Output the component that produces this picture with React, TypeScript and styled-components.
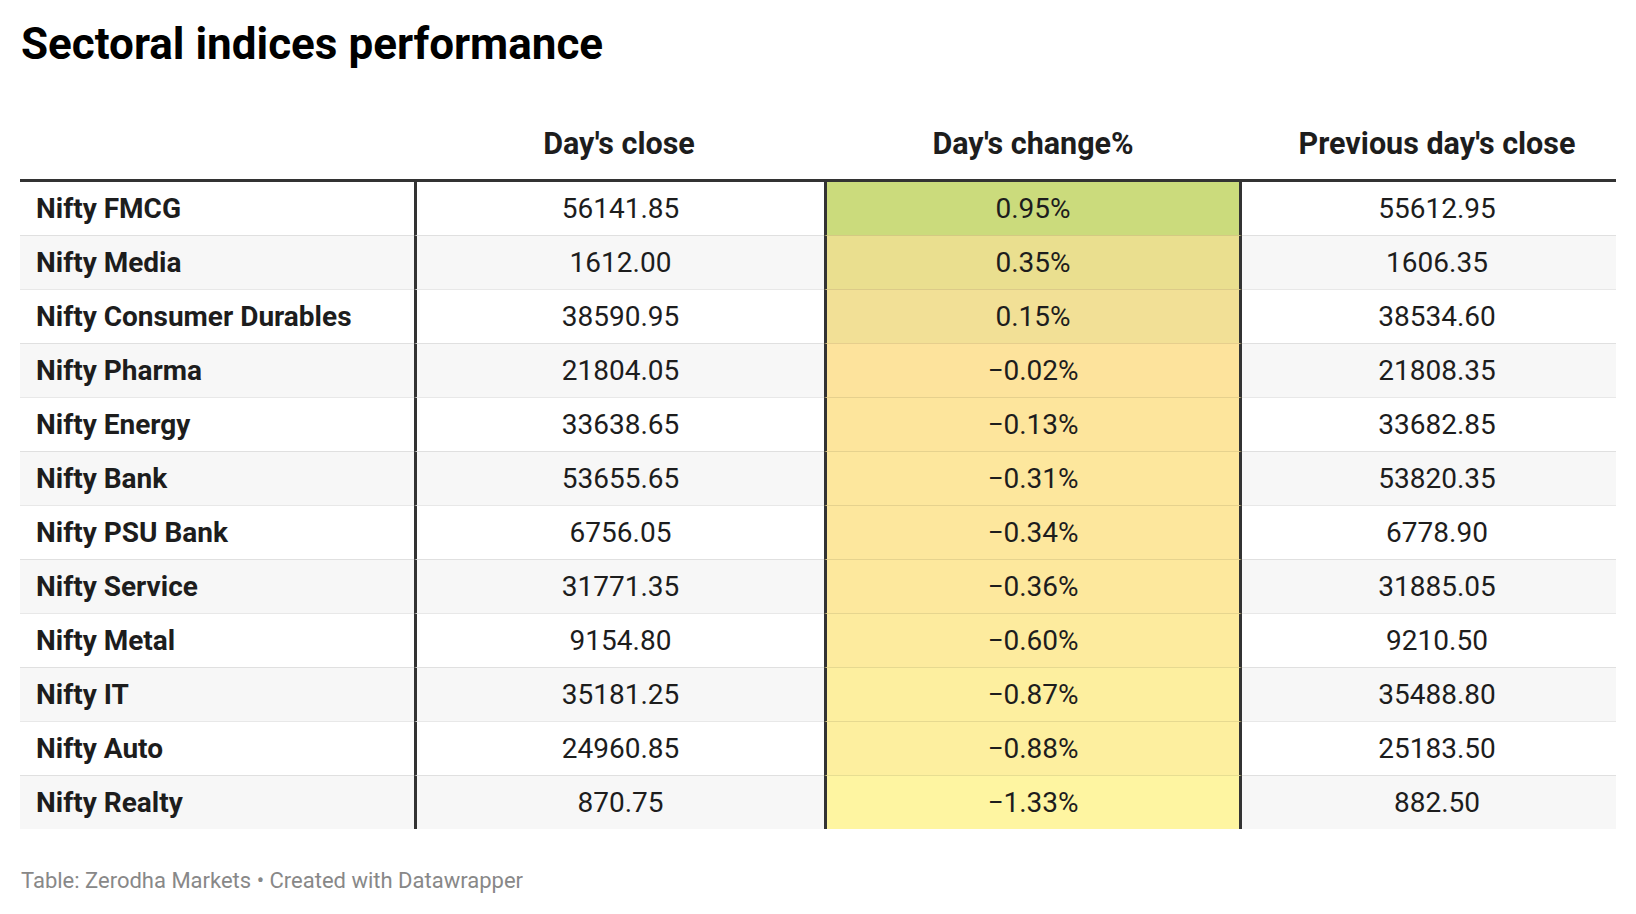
import React from 'react'
import styled, { createGlobalStyle } from 'styled-components'

const GlobalStyle = createGlobalStyle`
    html, body {
        margin: 0;
        padding: 0;
        background: #fff;
    }
    body {
        font-family: Roboto, 'Liberation Sans', Arial, sans-serif;
        -webkit-font-smoothing: antialiased;
    }
    * {
        box-sizing: border-box;
    }
`

const columns = '394px 410px 418px 374px'

const Page = styled.div`
    padding: 18px 20px 0;
    width: 1636px;
`

const Title = styled.h1`
    margin: 0 0 56px;
    font-size: 44px;
    line-height: 52px;
    font-weight: 700;
    color: #000;
    padding-left: 1px;
`

const Table = styled.div`
    display: flex;
    flex-direction: column;
    width: 1596px;
`

const HeadRow = styled.div`
    display: grid;
    grid-template-columns: ${columns};
    border-bottom: 3px solid #333;
`

const HeadCell = styled.div<{ $last?: boolean }>`
    padding: 0 ${p => (p.$last ? '0' : '16px')} 17px 16px;
    font-size: 30.5px;
    line-height: 36px;
    font-weight: 700;
    color: #1d1d1d;
    text-align: center;
    white-space: nowrap;
`

const Row = styled.div<{ $striped: boolean }>`
    display: grid;
    grid-template-columns: ${columns};
    background: ${p => (p.$striped ? '#f7f7f7' : '#fff')};
`

const Cell = styled.div<{
    $first: boolean
    $label?: boolean
    $heat?: string
    $rightRule?: boolean
    $leftRule?: boolean
    $last?: boolean
}>`
    padding: 10px ${p => (p.$last ? '0' : '16px')} 10px 16px;
    font-size: 28px;
    line-height: 33px;
    color: #1d1d1d;
    font-weight: ${p => (p.$label ? 700 : 400)};
    text-align: ${p => (p.$label ? 'left' : 'center')};
    background: ${p => p.$heat || 'transparent'};
    border-top: ${p => (p.$first ? 'none' : '1px solid rgba(0, 0, 0, 0.09)')};
    border-left: ${p => (p.$leftRule ? '3px solid #333' : 'none')};
    border-right: ${p => (p.$rightRule ? '3px solid #333' : 'none')};
    white-space: nowrap;
`

const Footer = styled.div`
    margin-top: 39px;
    font-size: 22px;
    line-height: 26px;
    color: #888;
    padding-left: 1px;
`

type Index = { name: string; close: string; change: string; prev: string; heat: string }

const rows: Index[] = [
    { name: 'Nifty FMCG', close: '56141.85', change: '0.95%', prev: '55612.95', heat: '#cbdb7c' },
    { name: 'Nifty Media', close: '1612.00', change: '0.35%', prev: '1606.35', heat: '#eadf8f' },
    { name: 'Nifty Consumer Durables', close: '38590.95', change: '0.15%', prev: '38534.60', heat: '#f2e096' },
    { name: 'Nifty Pharma', close: '21804.05', change: '\u22120.02%', prev: '21808.35', heat: '#fde39c' },
    { name: 'Nifty Energy', close: '33638.65', change: '\u22120.13%', prev: '33682.85', heat: '#fde59c' },
    { name: 'Nifty Bank', close: '53655.65', change: '\u22120.31%', prev: '53820.35', heat: '#fde79d' },
    { name: 'Nifty PSU Bank', close: '6756.05', change: '\u22120.34%', prev: '6778.90', heat: '#fde79d' },
    { name: 'Nifty Service', close: '31771.35', change: '\u22120.36%', prev: '31885.05', heat: '#fde89d' },
    { name: 'Nifty Metal', close: '9154.80', change: '\u22120.60%', prev: '9210.50', heat: '#fdeb9e' },
    { name: 'Nifty IT', close: '35181.25', change: '\u22120.87%', prev: '35488.80', heat: '#fdef9f' },
    { name: 'Nifty Auto', close: '24960.85', change: '\u22120.88%', prev: '25183.50', heat: '#fdef9f' },
    { name: 'Nifty Realty', close: '870.75', change: '\u22121.33%', prev: '882.50', heat: '#fef5a1' },
]

const App = () => (
    <>
        <GlobalStyle />
        <Page>
            <Title>Sectoral indices performance</Title>
            <Table>
                <HeadRow>
                    <HeadCell />
                    <HeadCell>Day's close</HeadCell>
                    <HeadCell>Day's change%</HeadCell>
                    <HeadCell $last>Previous day's close</HeadCell>
                </HeadRow>
                {rows.map((r, i) => (
                    <Row key={r.name} $striped={i % 2 === 1}>
                        <Cell $first={i === 0} $label>
                            {r.name}
                        </Cell>
                        <Cell $first={i === 0} $leftRule>
                            {r.close}
                        </Cell>
                        <Cell $first={i === 0} $leftRule $rightRule $heat={r.heat}>
                            {r.change}
                        </Cell>
                        <Cell $first={i === 0} $last>
                            {r.prev}
                        </Cell>
                    </Row>
                ))}
            </Table>
            <Footer>Table: Zerodha Markets • Created with Datawrapper</Footer>
        </Page>
    </>
)

export default App
